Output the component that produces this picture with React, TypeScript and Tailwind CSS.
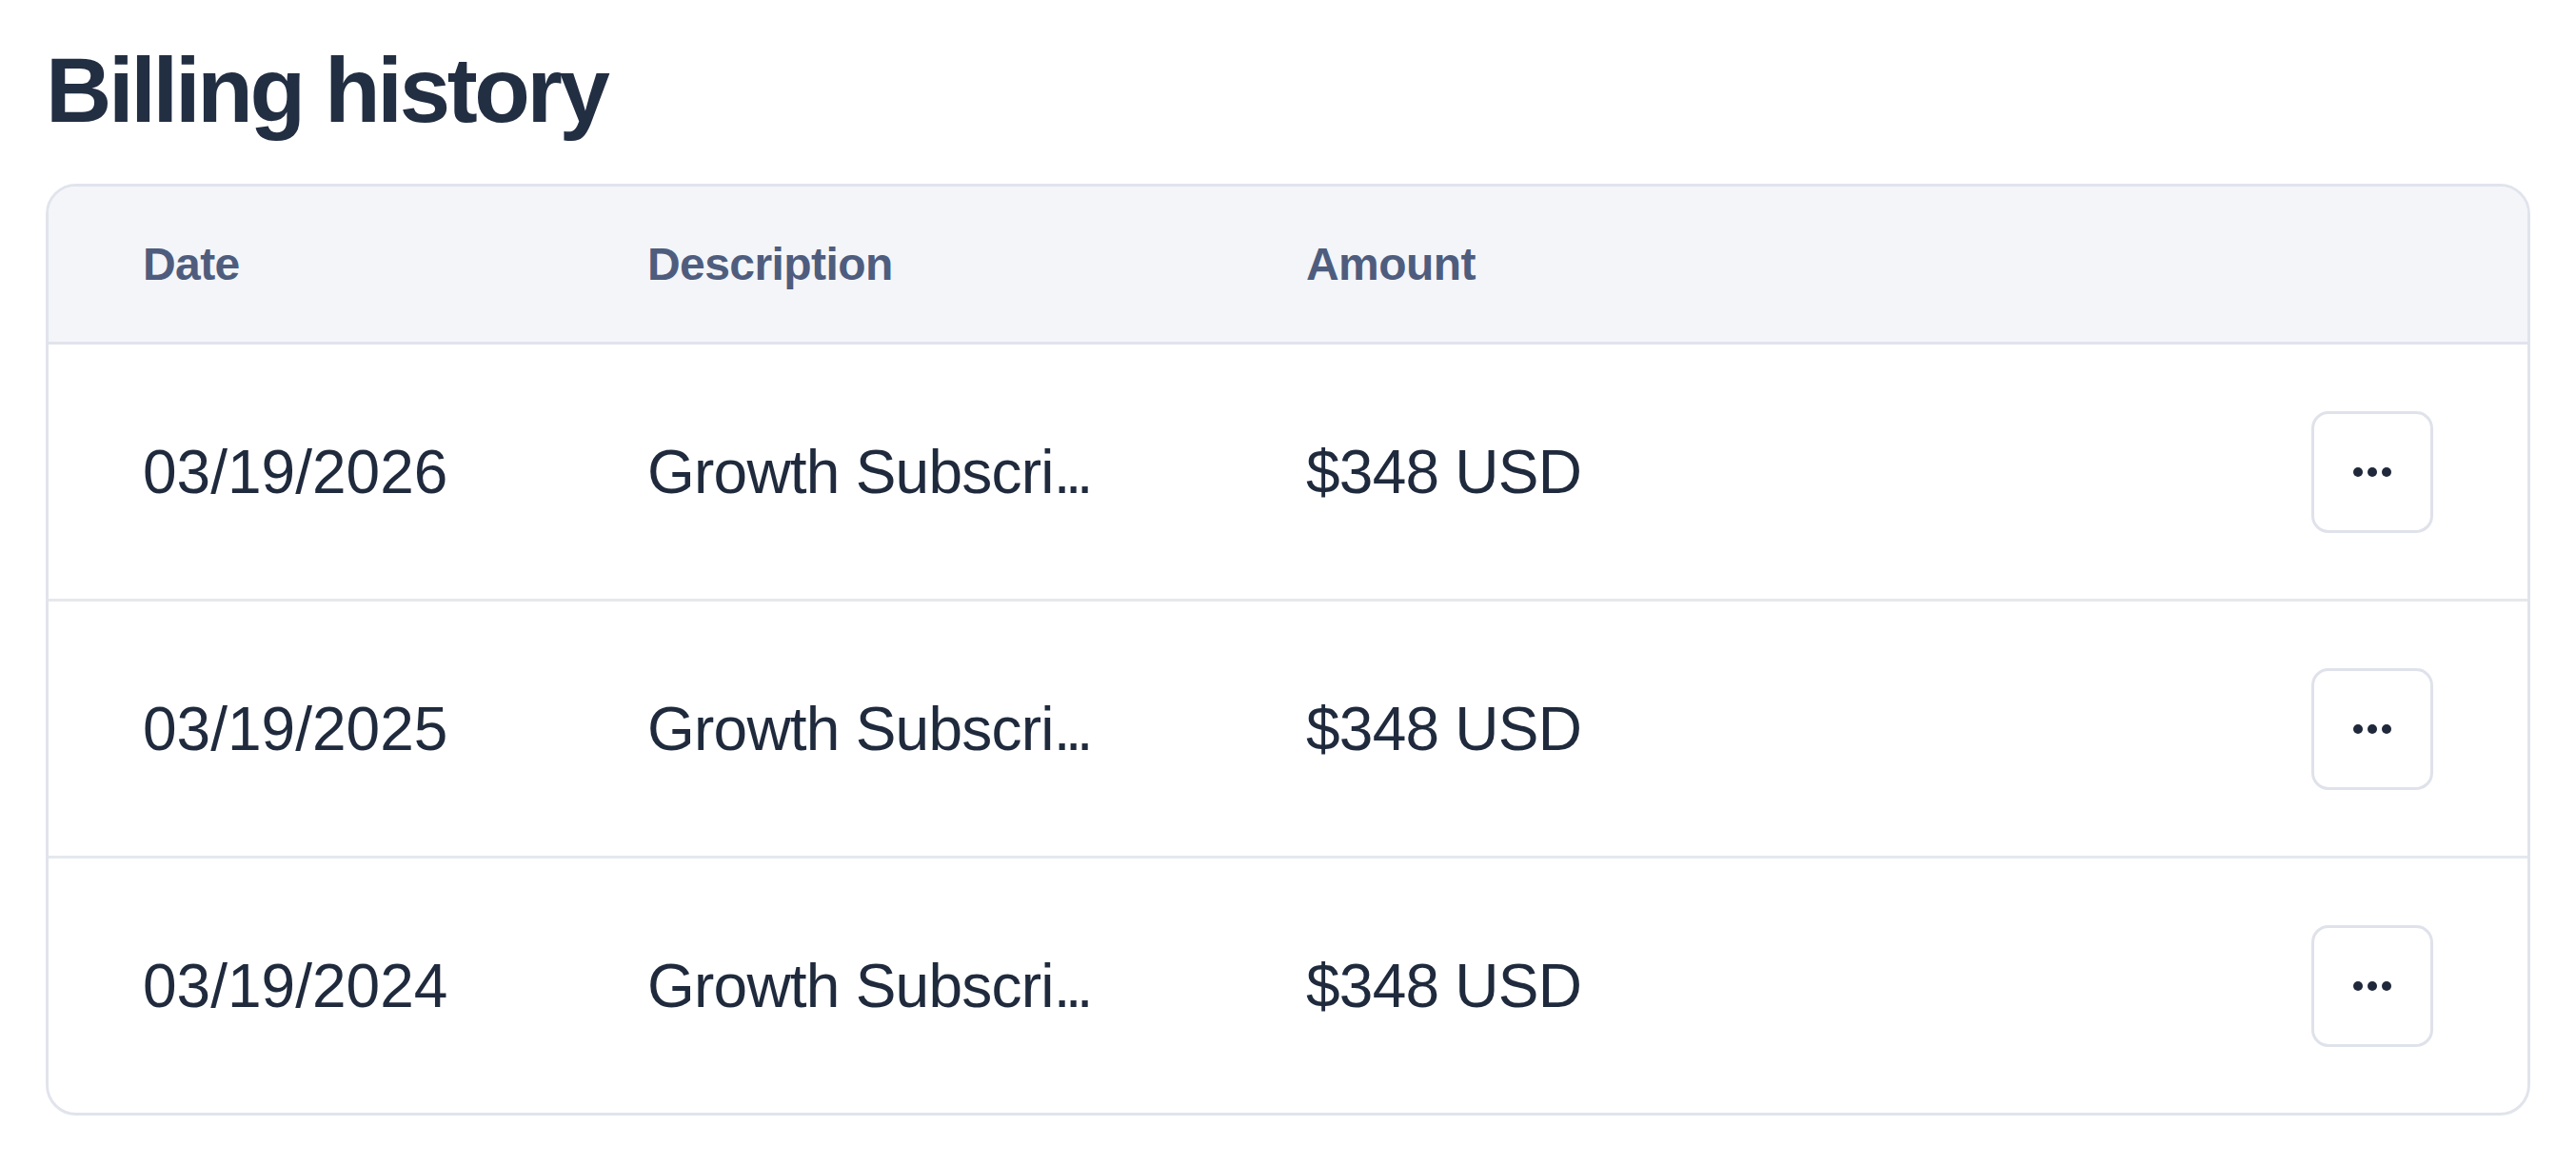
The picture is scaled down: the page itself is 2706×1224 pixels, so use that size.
import React from 'react';

interface Invoice {
  date: string;
  description: string;
  amount: string;
}

const invoices: Invoice[] = [
  { date: '03/19/2026', description: 'Growth Subscri', amount: '$348 USD' },
  { date: '03/19/2025', description: 'Growth Subscri', amount: '$348 USD' },
  { date: '03/19/2024', description: 'Growth Subscri', amount: '$348 USD' },
];

const rowClass = 'grid grid-cols-[530px_692px_1fr_128px] items-center px-[99px]';
const headClass = 'text-[48px] font-bold tracking-[-0.012em] text-[#4e5d7e]';
const cellClass = 'text-[64px] text-[#1f2a3d] whitespace-nowrap';

const MoreDots: React.FC = () => (
  <svg width="40" height="12" viewBox="0 0 40 12" fill="#1f293b">
    <circle cx="5" cy="6" r="5" />
    <circle cx="20" cy="6" r="5" />
    <circle cx="35" cy="6" r="5" />
  </svg>
);

const App: React.FC = () => {
  return (
    <div className="min-h-screen bg-white px-[48px] pt-[47px] font-['Liberation_Sans',Arial,sans-serif]">
      {/* Title */}
      <h1 className="text-[96px] leading-none font-bold tracking-[-0.035em] text-[#222e42] mb-[50px]">
        Billing history
      </h1>

      {/* Table card */}
      <div className="border-[3px] border-[#e1e4ec] rounded-[32px] overflow-hidden bg-white">
        <div className={`${rowClass} h-[166px] bg-[#f3f5f9] border-b-[3px] border-[#e1e4ec]`}>
          <span className={headClass}>Date</span>
          <span className={headClass}>Description</span>
          <span className={headClass}>Amount</span>
          <span />
        </div>

        {invoices.map((inv, i) => (
          <div
            key={inv.date}
            className={`${rowClass} ${i < invoices.length - 1 ? 'h-[270px] border-b-[3px] border-[#e6e8ee]' : 'h-[267px]'}`}
          >
            <span className={cellClass}>{inv.date}</span>
            <span className={`${cellClass} tracking-[-0.012em]`}>
              {inv.description}
              <span className="tracking-[-0.09em]">...</span>
            </span>
            <span className={`${cellClass} tracking-[-0.012em]`}>{inv.amount}</span>
            <button className="w-[128px] h-[128px] rounded-[18px] border-[3px] border-[#dfe2ea] bg-white flex items-center justify-center">
              <MoreDots />
            </button>
          </div>
        ))}
      </div>
    </div>
  );
};

export default App;
